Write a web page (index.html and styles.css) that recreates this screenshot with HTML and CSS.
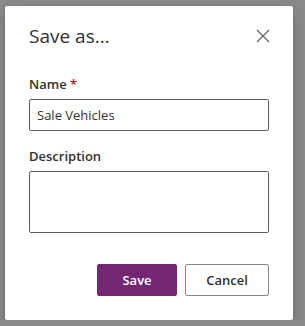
FILE: index.html
```html
<!DOCTYPE html>
<html lang="en">
<head>
  <meta charset="UTF-8">
  <meta name="viewport" content="width=device-width, initial-scale=1.0">
  <title>Save as</title>
  <link rel="stylesheet" href="styles.css">
</head>
<body>
  <div class="dialog">
    <div class="dialog-header">
      <h2 class="dialog-title">Save as...</h2>
      <button class="close-btn" aria-label="Close">
        <svg width="14" height="14" viewBox="0 0 14 14">
          <path d="M1 1 L13 13 M13 1 L1 13" stroke="#605e5c" stroke-width="1.1" fill="none"/>
        </svg>
      </button>
    </div>
    <div class="field">
      <label class="field-label" for="name">Name <span class="required">*</span></label>
      <input class="text-input" id="name" type="text" value="Sale Vehicles">
    </div>
    <div class="field">
      <label class="field-label" for="description">Description</label>
      <textarea class="text-area" id="description"></textarea>
    </div>
    <div class="actions">
      <button class="btn btn-primary">Save</button>
      <button class="btn btn-default">Cancel</button>
    </div>
  </div>
</body>
</html>
```

FILE: styles.css
```css
/* Page backdrop */
body {
  font-family: "Open Sans", "Noto Sans", sans-serif;
  margin: 0;
  padding: 6px 0 0 5px;
  background-color: #8a8a8a;
  color: #323130;
}

/* Dialog card */
.dialog {
  width: 240px;
  background-color: #fff;
  border-radius: 2px;
  padding: 0 24px 24px 24px;
  box-shadow: 0 6px 14px rgba(0, 0, 0, 0.18), 0 1px 4px rgba(0, 0, 0, 0.12);
}

/* Header with title and close */
.dialog-header {
  display: flex;
  justify-content: space-between;
  align-items: center;
  padding: 16px 0 19px 0;
}

.dialog-title {
  margin: 0;
  font-size: 19px;
  font-weight: 500;
  line-height: 28px;
}

.close-btn {
  border: none;
  background: none;
  padding: 0;
  margin-right: -1px;
  width: 14px;
  height: 14px;
  display: flex;
}

/* Form fields */
.field {
  display: flex;
  flex-direction: column;
  margin-bottom: 10px;
}

.field-label {
  font-size: 13px;
  font-weight: 600;
  line-height: 20px;
  padding: 5px 0;
}

.required {
  color: #a4262c;
}

.text-input,
.text-area {
  box-sizing: border-box;
  width: 100%;
  border: 1px solid #605e5c;
  border-radius: 2px;
  font-family: inherit;
  font-size: 13px;
  color: #323130;
  padding: 0 7px;
  margin: 0;
}

.text-input {
  height: 32px;
}

.text-area {
  height: 62px;
  resize: none;
  display: block;
}

/* Footer buttons */
.actions {
  display: flex;
  justify-content: flex-end;
  gap: 8px;
  margin-top: 31px;
}

.btn {
  height: 32px;
  border-radius: 2px;
  font-family: inherit;
  font-size: 13px;
  font-weight: 600;
  cursor: pointer;
}

.btn-primary {
  width: 80px;
  background-color: #742774;
  border: 1px solid #742774;
  color: #fff;
}

.btn-default {
  width: 84px;
  background-color: #fff;
  border: 1px solid #8a8886;
  color: #323130;
}
```
